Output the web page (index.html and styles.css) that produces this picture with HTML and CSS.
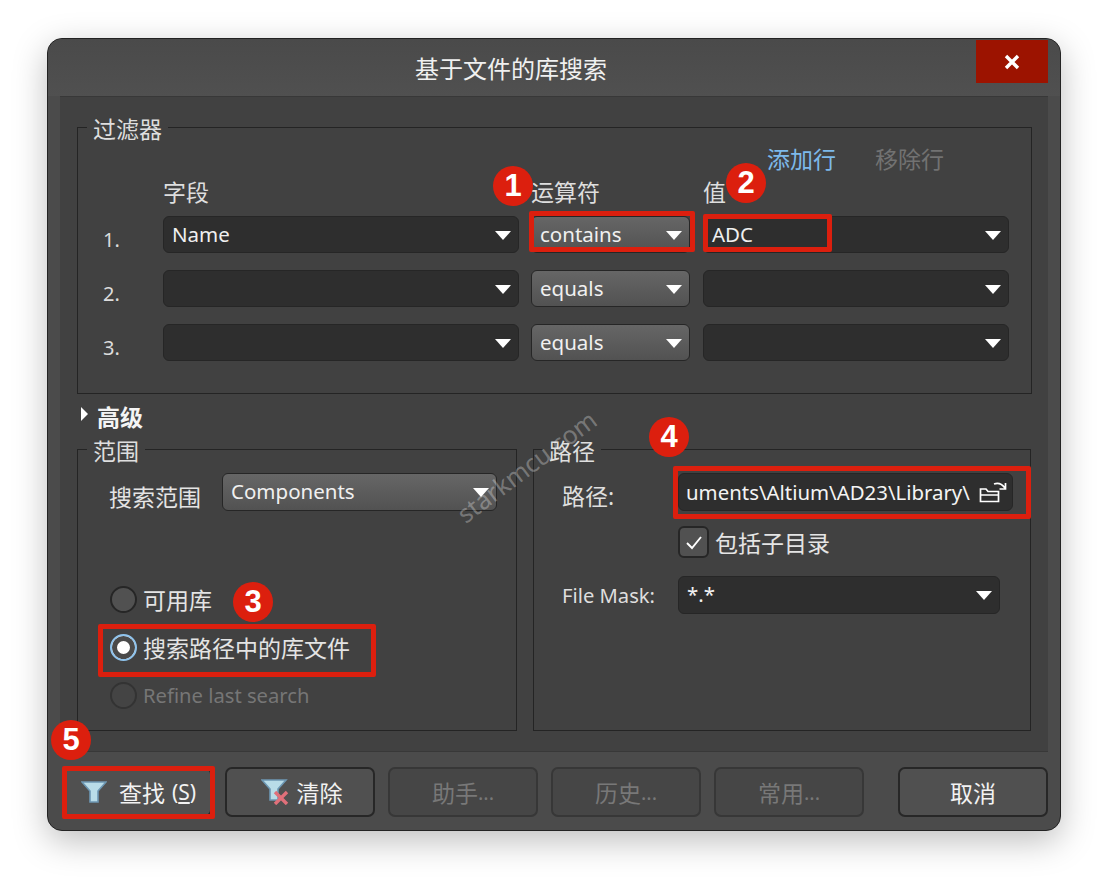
FILE: index.html
```html
<!DOCTYPE html>
<html lang="zh-CN">
<head>
    <meta charset="UTF-8">
    <title>基于文件的库搜索</title>
    <link rel="stylesheet" href="styles.css">
</head>
<body>

<div class="window">
    <div class="titlebar">
        基于文件的库搜索
        <div class="close-btn">
            <svg width="18" height="18" viewBox="0 0 18 18"><path d="M3 3 L15 15 M15 3 L3 15" stroke="#fff" stroke-width="3.4"/></svg>
        </div>
    </div>

    <div class="panel">
        <div class="group filter-group">
            <div class="group-title">过滤器</div>
            <div class="row-actions">
                <span class="link">添加行</span>
                <span class="link-off">移除行</span>
            </div>
            <div class="filter-grid">
                <div></div>
                <div class="col-label">字段</div>
                <div class="col-label">运算符</div>
                <div class="col-label">值</div>

                <div class="row-num">1.</div>
                <div class="combo dark">Name</div>
                <div class="combo gray">contains</div>
                <div class="combo dark">ADC</div>

                <div class="row-num">2.</div>
                <div class="combo dark"></div>
                <div class="combo gray">equals</div>
                <div class="combo dark"></div>

                <div class="row-num">3.</div>
                <div class="combo dark"></div>
                <div class="combo gray">equals</div>
                <div class="combo dark"></div>
            </div>
        </div>

        <div class="advanced">
            <span class="tri-right"></span>
            <b>高级</b>
        </div>

        <div class="lower">
            <div class="group scope-group">
                <div class="group-title">范围</div>
                <div class="scope-row">
                    <span class="scope-label">搜索范围</span>
                    <div class="combo gray scope-combo">Components</div>
                </div>
                <div class="radio-list">
                    <div class="radio-row"><span class="radio"></span>可用库</div>
                    <div class="radio-row"><span class="radio checked"></span>搜索路径中的库文件</div>
                    <div class="radio-row disabled"><span class="radio"></span><span class="latin-label">Refine last search</span></div>
                </div>
            </div>

            <div class="group path-group">
                <div class="group-title">路径</div>
                <div class="field-row">
                    <span class="field-label">路径:</span>
                    <div class="path-input">
                        <span>uments\Altium\AD23\Library\</span>
                        <svg class="folder-icon" width="28" height="22" viewBox="0 0 28 22" fill="none" stroke="#fff" stroke-width="1.7">
                            <path d="M1.5 20.5 V8 H7 L9 10.5 H19.5 V20.5 Z M1.5 14 H19.5"/>
                            <path d="M15 3 C19 1.5 23 3 26 7 M26.5 2 V8 H20.5"/>
                        </svg>
                    </div>
                </div>
                <div class="check-row">
                    <span class="checkbox">
                        <svg width="18" height="15" viewBox="0 0 18 15" fill="none"><path d="M2 8 L7 13 L16 2" stroke="#fff" stroke-width="1.9"/></svg>
                    </span>
                    包括子目录
                </div>
                <div class="field-row mask-row">
                    <span class="field-label latin-label">File Mask:</span>
                    <div class="combo dark mask-combo">*.*</div>
                </div>
            </div>
        </div>
    </div>

    <div class="footer">
        <button class="btn icon-btn">
            <svg width="26" height="22" viewBox="0 0 26 22"><path d="M1 1 H25 L17 10 V21 H9 V10 Z" fill="#b9dce8" stroke="#6d97b3" stroke-width="1.6"/></svg>
            <span class="btn-gap">查找</span> <span class="shortcut">(<u>S</u>)</span>
        </button>
        <button class="btn icon-btn">
            <svg width="28" height="26" viewBox="0 0 28 26"><path d="M1 1 H25 L17 10 V21 H9 V10 Z" fill="#b9dce8" stroke="#6d97b3" stroke-width="1.6"/><path d="M14 13 L26 25 M26 13 L14 25" stroke="#e0707a" stroke-width="3.4"/></svg>
            清除
        </button>
        <button class="btn off">助手<span class="dots">...</span></button>
        <button class="btn off">历史<span class="dots">...</span></button>
        <button class="btn off">常用<span class="dots">...</span></button>
        <button class="btn cancel">取消</button>
    </div>

    <div class="watermark">starkmcu.com</div>

    <div class="mark mark-op"></div>
    <div class="mark mark-val"></div>
    <div class="mark mark-radio"></div>
    <div class="mark mark-path"></div>
    <div class="mark mark-find"></div>

    <div class="badge badge-1">1</div>
    <div class="badge badge-2">2</div>
    <div class="badge badge-3">3</div>
    <div class="badge badge-4">4</div>
    <div class="badge badge-5">5</div>
</div>

</body>
</html>
```

FILE: styles.css
```css
body {
    box-sizing: border-box;
    min-height: 100vh;
    margin: 0;
    padding: 38px 0 0 47px;
    background-color: #ffffff;
    color: #e4e4e4;
    font-family: "Noto Sans", "Noto Sans CJK SC", sans-serif;
    font-size: 23px;
}

.window {
    position: relative;
    box-sizing: border-box;
    width: 1014px;
    height: 793px;
    background-color: #4b4b4b;
    border: 1px solid #232323;
    border-radius: 15px;
    box-shadow: 0 10px 34px rgba(0, 0, 0, 0.26);
}

.titlebar {
    display: flex;
    align-items: center;
    justify-content: center;
    height: 57px;
    padding-right: 86px;
    font-size: 24px;
    color: #f0f0f0;
    background: linear-gradient(#4a4a4a, #505050);
    border-radius: 15px 15px 0 0;
}

.close-btn {
    position: absolute;
    top: 1px;
    right: 12px;
    display: flex;
    align-items: center;
    justify-content: center;
    width: 72px;
    height: 43px;
    background-color: #9c1300;
}

.panel {
    box-sizing: border-box;
    height: 656px;
    margin: 0 12px;
    padding: 30px 16px 0 17px;
    background-color: #414141;
    border-top: 1px solid #383838;
    border-bottom: 1px solid #383838;
}

.group {
    box-sizing: border-box;
    border: 1px solid #242424;
}

.group-title {
    width: fit-content;
    margin: -14px 0 0 9px;
    padding: 0 6px;
    height: 30px;
    line-height: 30px;
    background-color: #414141;
    color: #dedede;
}

.filter-group {
    height: 267px;
}

.row-actions {
    display: flex;
    justify-content: flex-end;
    gap: 39px;
    height: 32px;
    line-height: 32px;
    margin-top: -1px;
    padding-right: 87px;
}

.link {
    color: #7db9ea;
}

.link-off {
    color: #727272;
}

.filter-grid {
    display: grid;
    grid-template-columns: 48px 356px 160px 306px;
    grid-template-rows: 40px;
    grid-auto-rows: 54px;
    column-gap: 12px;
    padding: 1px 0 0 25px;
    align-items: start;
}

.filter-grid .gray {
    width: 159px;
}

.col-label {
    height: 32px;
    line-height: 32px;
    color: #dedede;
}

.row-num {
    padding-top: 9px;
    font-size: 20px;
    line-height: 30px;
    color: #dcdcdc;
}

.combo {
    position: relative;
    box-sizing: border-box;
    height: 37px;
    padding-left: 8px;
    line-height: 35px;
    font-size: 20.5px;
    color: #f0f0f0;
    border: 1px solid #262626;
    border-radius: 6px;
}

.combo::after {
    content: "";
    position: absolute;
    top: 14px;
    right: 7px;
    border-left: 8px solid transparent;
    border-right: 8px solid transparent;
    border-top: 9px solid #ffffff;
}

.dark {
    background-color: #2e2e2e;
}

.gray {
    background: linear-gradient(#666666, #525252);
}

.advanced {
    display: flex;
    align-items: center;
    gap: 9px;
    height: 30px;
    margin: 7px 0 18px 4px;
    color: #f4f4f4;
}

.tri-right {
    width: 0;
    height: 0;
    margin-top: -5px;
    border-top: 7px solid transparent;
    border-bottom: 7px solid transparent;
    border-left: 7px solid #ffffff;
}

.lower {
    display: grid;
    grid-template-columns: 440px 498px;
    column-gap: 16px;
    height: 282px;
}

.scope-row {
    display: flex;
    gap: 21px;
    margin-top: 7px;
    padding-left: 31px;
}

.scope-label {
    padding-top: 5px;
    line-height: 38px;
}

.scope-combo {
    width: 275px;
    height: 38px;
}

.radio-list {
    margin-top: 59px;
    padding-left: 32px;
}

.radio-row {
    display: flex;
    align-items: center;
    gap: 6px;
    height: 48px;
}

.radio {
    box-sizing: border-box;
    width: 27px;
    height: 27px;
    background-color: #515151;
    border: 2px solid #262626;
    border-radius: 50%;
}

.radio.checked {
    background-color: #ffffff;
    border: 2px solid #8fc3ec;
    box-shadow: inset 0 0 0 5px #4a4a4a;
}

.disabled {
    color: #767676;
}

.disabled .radio {
    background-color: #444444;
    border-color: #333333;
}

.latin-label {
    font-size: 20.2px;
}

.field-row {
    display: flex;
    margin-top: 7px;
    padding-left: 28px;
}

.field-label {
    width: 116px;
    padding-top: 4px;
    line-height: 38px;
    color: #dedede;
}

.path-input {
    box-sizing: border-box;
    display: flex;
    align-items: center;
    justify-content: space-between;
    width: 335px;
    height: 38px;
    padding: 0 5px 0 7px;
    font-size: 20.4px;
    color: #f4f4f4;
    background-color: #2e2e2e;
    border: 1px solid #262626;
    border-radius: 6px;
}

.check-row {
    display: flex;
    align-items: center;
    gap: 6px;
    height: 32px;
    margin: 11px 0 0 144px;
}

.checkbox {
    box-sizing: border-box;
    display: flex;
    align-items: center;
    justify-content: center;
    width: 31px;
    height: 32px;
    background-color: #515151;
    border: 2px solid #262626;
    border-radius: 6px;
}

.mask-row {
    margin-top: 18px;
}

.mask-row .field-label {
    padding-top: 0;
}

.mask-combo {
    width: 322px;
    height: 38px;
}

.footer {
    display: flex;
    gap: 13px;
    padding: 15px 12px 0 14px;
}

.btn {
    display: flex;
    align-items: center;
    justify-content: center;
    gap: 8px;
    width: 150px;
    height: 50px;
    padding: 0;
    font: inherit;
    color: #f2f2f2;
    background-color: #505050;
    border: 2px solid #272727;
    border-radius: 7px;
}

.icon-btn {
    padding-left: 3px;
}

.btn.off {
    gap: 0;
    color: #787878;
    background-color: #464646;
    border-color: #373737;
}

.dots {
    font-size: 20px;
}

.btn.cancel {
    margin-left: auto;
}

.btn-gap {
    margin-left: 4px;
}

.shortcut {
    margin-left: -1px;
    font-size: 21px;
}

.watermark {
    position: absolute;
    top: 410px;
    left: 395px;
    font-size: 25px;
    color: rgba(255, 255, 255, 0.3);
    transform: rotate(-37deg);
    white-space: nowrap;
}

.mark {
    position: absolute;
    box-sizing: border-box;
    border: 5px solid #dc1f0e;
    border-radius: 2px;
}

.mark-op {
    top: 172px;
    left: 481px;
    width: 166px;
    height: 41px;
}

.mark-val {
    top: 175px;
    left: 655px;
    width: 129px;
    height: 38px;
}

.mark-radio {
    top: 585px;
    left: 50px;
    width: 278px;
    height: 53px;
}

.mark-path {
    top: 427px;
    left: 625px;
    width: 358px;
    height: 53px;
}

.mark-find {
    top: 727px;
    left: 14px;
    width: 153px;
    height: 53px;
}

.badge {
    position: absolute;
    display: flex;
    align-items: center;
    justify-content: center;
    width: 40px;
    height: 40px;
    font-family: "Liberation Sans", sans-serif;
    font-size: 31px;
    font-weight: bold;
    color: #ffffff;
    background-color: #dc1f0e;
    border-radius: 50%;
}

.badge-1 { top: 127px; left: 445px; }
.badge-2 { top: 124px; left: 678px; }
.badge-3 { top: 543px; left: 185px; }
.badge-4 { top: 378px; left: 601px; }
.badge-5 { top: 681px; left: 3px; }
```
